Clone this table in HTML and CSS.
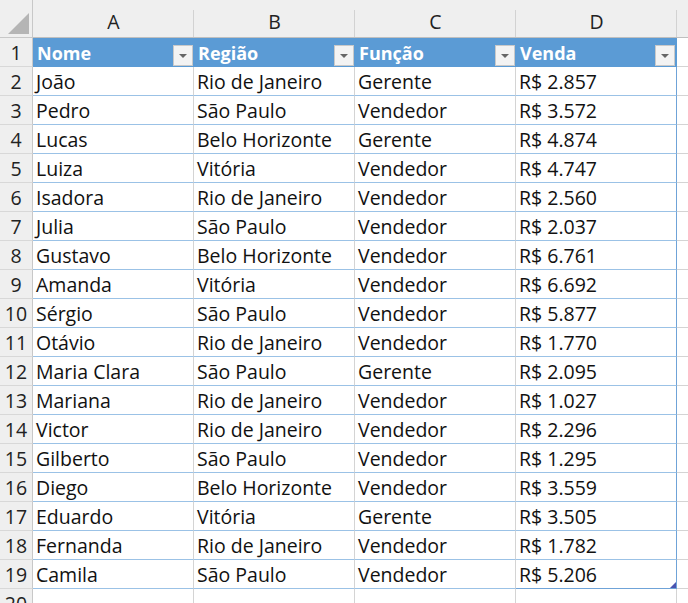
FILE: index.html
```html
<!DOCTYPE html>
<html lang="pt-BR">
<head>
<meta charset="utf-8">
<title>Planilha</title>
<link rel="stylesheet" href="styles.css">
</head>
<body>
<div class="sheet">
  <div class="corner"><svg width="32" height="37" viewBox="0 0 32 37"><polygon points="8,34 29,34 29,13" fill="#b5b5b5"/></svg></div>
  <div class="colh">A</div><div class="colh">B</div><div class="colh">C</div><div class="colh">D</div><div class="colh colh-e"></div>

  <div class="rowh">1</div>
  <div class="hd"><span>Nome</span><i class="flt"></i></div>
  <div class="hd"><span>Região</span><i class="flt"></i></div>
  <div class="hd"><span>Função</span><i class="flt"></i></div>
  <div class="hd last"><span>Venda</span><i class="flt"></i></div>
  <div class="ext"></div>

  <div class="rowh">2</div><div class="td">João</div><div class="td">Rio de Janeiro</div><div class="td">Gerente</div><div class="td last">R$ 2.857</div><div class="ext"></div>
  <div class="rowh">3</div><div class="td">Pedro</div><div class="td">São Paulo</div><div class="td">Vendedor</div><div class="td last">R$ 3.572</div><div class="ext"></div>
  <div class="rowh">4</div><div class="td">Lucas</div><div class="td">Belo Horizonte</div><div class="td">Gerente</div><div class="td last">R$ 4.874</div><div class="ext"></div>
  <div class="rowh">5</div><div class="td">Luiza</div><div class="td">Vitória</div><div class="td">Vendedor</div><div class="td last">R$ 4.747</div><div class="ext"></div>
  <div class="rowh">6</div><div class="td">Isadora</div><div class="td">Rio de Janeiro</div><div class="td">Vendedor</div><div class="td last">R$ 2.560</div><div class="ext"></div>
  <div class="rowh">7</div><div class="td">Julia</div><div class="td">São Paulo</div><div class="td">Vendedor</div><div class="td last">R$ 2.037</div><div class="ext"></div>
  <div class="rowh">8</div><div class="td">Gustavo</div><div class="td">Belo Horizonte</div><div class="td">Vendedor</div><div class="td last">R$ 6.761</div><div class="ext"></div>
  <div class="rowh">9</div><div class="td">Amanda</div><div class="td">Vitória</div><div class="td">Vendedor</div><div class="td last">R$ 6.692</div><div class="ext"></div>
  <div class="rowh">10</div><div class="td">Sérgio</div><div class="td">São Paulo</div><div class="td">Vendedor</div><div class="td last">R$ 5.877</div><div class="ext"></div>
  <div class="rowh">11</div><div class="td">Otávio</div><div class="td">Rio de Janeiro</div><div class="td">Vendedor</div><div class="td last">R$ 1.770</div><div class="ext"></div>
  <div class="rowh">12</div><div class="td">Maria Clara</div><div class="td">São Paulo</div><div class="td">Gerente</div><div class="td last">R$ 2.095</div><div class="ext"></div>
  <div class="rowh">13</div><div class="td">Mariana</div><div class="td">Rio de Janeiro</div><div class="td">Vendedor</div><div class="td last">R$ 1.027</div><div class="ext"></div>
  <div class="rowh">14</div><div class="td">Victor</div><div class="td">Rio de Janeiro</div><div class="td">Vendedor</div><div class="td last">R$ 2.296</div><div class="ext"></div>
  <div class="rowh">15</div><div class="td">Gilberto</div><div class="td">São Paulo</div><div class="td">Vendedor</div><div class="td last">R$ 1.295</div><div class="ext"></div>
  <div class="rowh">16</div><div class="td">Diego</div><div class="td">Belo Horizonte</div><div class="td">Vendedor</div><div class="td last">R$ 3.559</div><div class="ext"></div>
  <div class="rowh">17</div><div class="td">Eduardo</div><div class="td">Vitória</div><div class="td">Gerente</div><div class="td last">R$ 3.505</div><div class="ext"></div>
  <div class="rowh">18</div><div class="td">Fernanda</div><div class="td">Rio de Janeiro</div><div class="td">Vendedor</div><div class="td last">R$ 1.782</div><div class="ext"></div>
  <div class="rowh">19</div><div class="td">Camila</div><div class="td">São Paulo</div><div class="td">Vendedor</div><div class="td last end">R$ 5.206<i class="grip"></i></div><div class="ext"></div>

  <div class="rowh">20</div><div class="cell"></div><div class="cell"></div><div class="cell"></div><div class="cell"></div><div class="ext"></div>
</div>
</body>
</html>
```
FILE: styles.css
```css
* { box-sizing: border-box; }
html, body { margin: 0; padding: 0; background: #ffffff; overflow: hidden; }
body {
  font-family: "Open Sans", "Noto Sans", sans-serif;
  font-size: 19.5px;
  color: #111;
}
.sheet {
  display: grid;
  grid-template-columns: 33px 161px 161px 161px 161px 1fr;
  grid-template-rows: 38px repeat(20, 29px);
  width: 688px;
  height: 603px;
  overflow: hidden;
}
.sheet > div {
  display: flex;
  align-items: flex-end;
  white-space: nowrap;
  overflow: hidden;
  line-height: 26px;
  padding-bottom: 0;
}
.corner {
  background: #efefef;
  border-right: 1px solid #c8c8c8;
  border-bottom: 1px solid #c8c8c8;
  align-items: flex-start !important;
}
.corner svg { display: block; }
.colh {
  justify-content: center;
  background: linear-gradient(#d2d2d2, #d2d2d2) right bottom / 1px 27px no-repeat, #efefef;
  border-bottom: 1px solid #bfbfbf;
  color: #222;
  padding-bottom: 2px !important;
}
.colh-e { background: #efefef; }
.rowh {
  justify-content: center;
  background: #efefef;
  border-right: 1px solid #c8c8c8;
  border-bottom: 1px solid #d8d8d8;
  color: #222;
}
.hd {
  position: relative;
  background: #5b9bd5;
  color: #fff;
  font-weight: 700;
  font-size: 18px;
  padding-left: 4px;
  padding-bottom: 1px !important;
}
.hd.last { border-right: 1px solid #5b9bd5; }
.flt {
  position: absolute;
  right: 1px;
  bottom: 1px;
  width: 20px;
  height: 21px;
  background: #f3f3f3;
  border: 1px solid #c9c9c9;
}
.flt::after {
  content: "";
  position: absolute;
  left: 5px;
  top: 8px;
  border-left: 4px solid transparent;
  border-right: 4px solid transparent;
  border-top: 4px solid #666;
}
.td {
  position: relative;
  padding-left: 3px;
  border-right: 1px solid #d4d4d4;
  border-bottom: 1px solid #9bc2e6;
}
.td.last { border-right: 1px solid #6fa3d8; }
.td.end { border-bottom: 1px solid #6fa3d8; }
.grip {
  position: absolute;
  right: 0;
  bottom: 0;
  width: 0;
  height: 0;
  border-left: 6px solid transparent;
  border-bottom: 6px solid #4a54b0;
}
.ext { border-bottom: 1px solid #d4d4d4; }
.cell { border-right: 1px solid #d4d4d4; border-bottom: 1px solid #d4d4d4; }
```
